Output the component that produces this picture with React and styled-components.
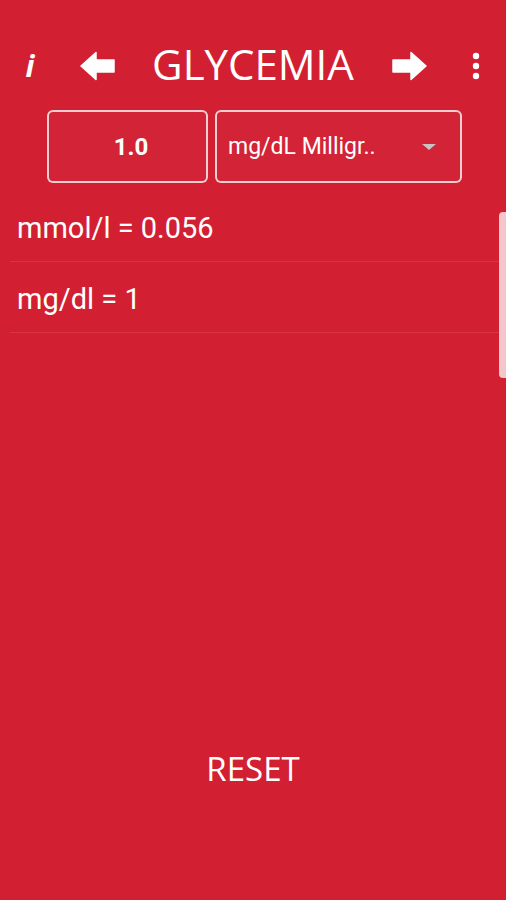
import React from 'react';
import styled, { createGlobalStyle } from 'styled-components';

const GlobalStyle = createGlobalStyle`
  html, body {
    margin: 0;
    padding: 0;
    background: #d31f32;
  }
  * {
    box-sizing: border-box;
  }
`;

const Screen = styled.div`
  position: relative;
  display: flex;
  flex-direction: column;
  min-height: 100vh;
  background: #d31f32;
  color: #ffffff;
  font-family: Roboto, "Noto Sans", sans-serif;
  overflow: hidden;
`;

const Header = styled.div`
  display: grid;
  grid-template-columns: 48px 48px 1fr 48px 48px;
  column-gap: 19px;
  align-items: center;
  height: 48px;
  margin-top: 40px;
  padding: 0 6px;
`;

const IconSlot = styled.div`
  display: flex;
  align-items: center;
  justify-content: center;
  height: 48px;
  padding-top: 3px;
`;

const InfoGlyph = styled.span`
  font-family: "Open Sans", "Liberation Sans", sans-serif;
  font-size: 30px;
  font-weight: 700;
  font-style: italic;
  line-height: 1;
`;

const Title = styled.h1`
  margin: 0;
  text-align: center;
  font-family: "Open Sans", "Liberation Sans", sans-serif;
  font-size: 42px;
  font-weight: 400;
  line-height: 44px;
`;

const InputRow = styled.div`
  display: flex;
  gap: 7px;
  margin-top: 22px;
  padding-left: 47px;
`;

const Field = styled.div`
  display: flex;
  align-items: center;
  justify-content: ${p => (p.$center ? 'center' : 'space-between')};
  width: ${p => p.$width}px;
  height: 73px;
  padding: 0 24px 0 11px;
  border: 2px solid rgba(255, 255, 255, 0.78);
  border-radius: 6px;
  background: rgba(255, 255, 255, 0.02);
`;

const ValueText = styled.span`
  font-size: 24px;
  font-weight: 700;
  padding-left: 20px;
`;

const UnitText = styled.span`
  font-size: 23px;
  font-weight: 400;
`;

const Caret = styled.span`
  width: 0;
  height: 0;
  border-left: 7px solid transparent;
  border-right: 7px solid transparent;
  border-top: 6px solid #c9c2c4;
`;

const Results = styled.div`
  margin: 8px 6px 0 10px;
`;

const ResultRow = styled.div`
  display: flex;
  align-items: center;
  height: 71px;
  padding: 4px 0 0 7px;
  border-bottom: 1px solid rgba(255, 255, 255, 0.1);
  font-size: 29px;
`;

const Spacer = styled.div`
  flex: 1;
`;

const ResetButton = styled.div`
  display: flex;
  align-items: center;
  justify-content: center;
  height: 64px;
  margin-bottom: 100px;
  font-family: "Open Sans", "Liberation Sans", sans-serif;
  font-size: 33px;
  font-weight: 400;
`;

const ScrollThumb = styled.div`
  position: absolute;
  top: 212px;
  right: 0;
  width: 7px;
  height: 166px;
  border-radius: 4px 0 0 4px;
  background: #f3c6cc;
`;

const Arrow = ({ flip }) => (
  <svg
    width="35"
    height="30"
    viewBox="0 0 35 30"
    style={flip ? { transform: 'scaleX(-1)' } : undefined}
  >
    <path
      d="M1 15 L16 1.5 L16 9 L34 9 L34 21 L16 21 L16 28.5 Z"
      fill="#ffffff"
      stroke="#ffffff"
      strokeWidth="1.5"
      strokeLinejoin="round"
    />
  </svg>
);

const Dots = () => (
  <svg width="8" height="30" viewBox="0 0 8 30">
    <circle cx="4" cy="5" r="3.2" fill="#ffffff" />
    <circle cx="4" cy="15" r="3.2" fill="#ffffff" />
    <circle cx="4" cy="25" r="3.2" fill="#ffffff" />
  </svg>
);

const results = [
  { unit: 'mmol/l', value: '0.056' },
  { unit: 'mg/dl', value: '1' },
];

export default function App() {
  return (
    <Screen>
      <GlobalStyle />
      <Header>
        <IconSlot>
          <InfoGlyph>i</InfoGlyph>
        </IconSlot>
        <IconSlot>
          <Arrow />
        </IconSlot>
        <Title>GLYCEMIA</Title>
        <IconSlot>
          <Arrow flip />
        </IconSlot>
        <IconSlot>
          <Dots />
        </IconSlot>
      </Header>

      <InputRow>
        <Field $width={161} $center>
          <ValueText>1.0</ValueText>
        </Field>
        <Field $width={247}>
          <UnitText>mg/dL Milligr..</UnitText>
          <Caret />
        </Field>
      </InputRow>

      <Results>
        {results.map(r => (
          <ResultRow key={r.unit}>
            {r.unit} = {r.value}
          </ResultRow>
        ))}
      </Results>

      <Spacer />
      <ResetButton>RESET</ResetButton>
      <ScrollThumb />
    </Screen>
  );
}
